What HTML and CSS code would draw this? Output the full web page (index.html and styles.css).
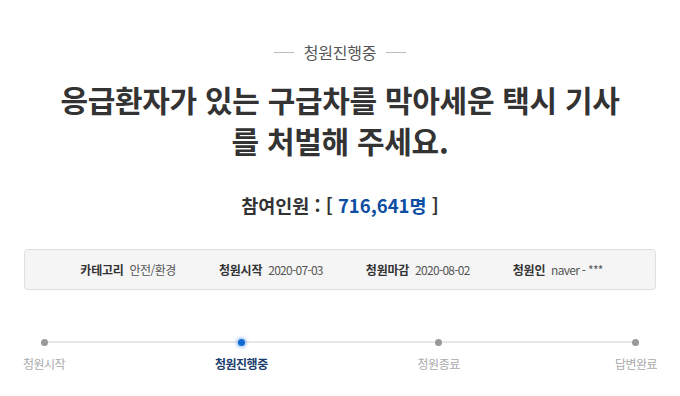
FILE: index.html
```html
<!DOCTYPE html>
<html lang="ko">
<head>
    <meta charset="UTF-8">
    <meta name="viewport" content="width=device-width, initial-scale=1.0">
    <title>청원진행중</title>
    <link rel="stylesheet" href="styles.css">
</head>
<body>

    <div class="petition">
        <!-- Status -->
        <div class="status"><span>청원진행중</span></div>

        <h1 class="title">응급환자가 있는 구급차를 막아세운 택시 기사를 처벌해 주세요.</h1>

        <p class="count">참여인원 : [ <span class="num">716,641명</span> ]</p>

        <!-- Info box -->
        <ul class="info">
            <li><strong>카테고리</strong> 안전/환경</li>
            <li><strong>청원시작</strong> <span class="date">2020-07-03</span></li>
            <li><strong>청원마감</strong> <span class="date">2020-08-02</span></li>
            <li><strong>청원인</strong> <span class="date">naver - ***</span></li>
        </ul>

        <!-- Progress -->
        <ol class="progress">
            <li class="step"><i class="dot"></i><span>청원시작</span></li>
            <li class="step active"><i class="dot"></i><span>청원진행중</span></li>
            <li class="step"><i class="dot"></i><span>청원종료</span></li>
            <li class="step"><i class="dot"></i><span>답변완료</span></li>
        </ol>
    </div>

</body>
</html>
```

FILE: styles.css
```css
/* General */
body {
    margin: 0;
    padding: 0;
    background: #fff;
    color: #333;
    font-family: 'Noto Sans CJK KR', 'Noto Sans', sans-serif;
}

.petition {
    padding: 41px 24px 0;
    text-align: center;
}

/* Status label with side lines */
.status {
    display: flex;
    justify-content: center;
    align-items: center;
    gap: 10px;
    font-size: 16px;
    line-height: 22px;
    color: #555;
    letter-spacing: -0.2px;
}

.status::before,
.status::after {
    content: "";
    width: 20px;
    height: 1px;
    background: #bbb;
}

.title {
    width: 572px;
    margin: 16px auto 0;
    font-size: 30px;
    line-height: 41px;
    font-weight: 700;
    letter-spacing: -0.3px;
    color: #333;
}

.count {
    margin: 30px 0 0;
    font-size: 18.5px;
    line-height: 28px;
    font-weight: 700;
    color: #333;
}

.count .num {
    color: #0b4ea2;
}

/* Info box */
.info {
    display: flex;
    justify-content: center;
    align-items: center;
    gap: 43px;
    height: 39px;
    margin: 30px 0 0;
    padding: 0 0 0 3px;
    list-style: none;
    background: #f5f5f5;
    border: 1px solid #dedede;
    border-radius: 4px;
    font-size: 12px;
    color: #555;
    letter-spacing: -0.5px;
}

.info strong {
    color: #333;
    margin-right: 3px;
    letter-spacing: -0.2px;
}

.info .date {
    letter-spacing: -0.7px;
}

/* Progress steps */
.progress {
    position: relative;
    display: flex;
    justify-content: space-between;
    margin: 49px 0 0;
    padding: 0;
    list-style: none;
}

.progress::before {
    content: "";
    position: absolute;
    left: 20px;
    right: 20px;
    top: 2px;
    height: 2px;
    background: #e8e8e8;
}

.step {
    position: relative;
    width: 40px;
    display: flex;
    flex-direction: column;
    align-items: center;
}

.dot {
    width: 7px;
    height: 7px;
    border-radius: 50%;
    background: #999;
}

.step span {
    margin-top: 9px;
    font-size: 12px;
    line-height: 18px;
    white-space: nowrap;
    color: #aaa;
    letter-spacing: -0.5px;
}

.step.active .dot {
    background: #1169d6;
    box-shadow: 0 0 3px 2px rgba(17, 105, 214, 0.3);
}

.step.active span {
    color: #1d3d6e;
    font-weight: 700;
}
```
